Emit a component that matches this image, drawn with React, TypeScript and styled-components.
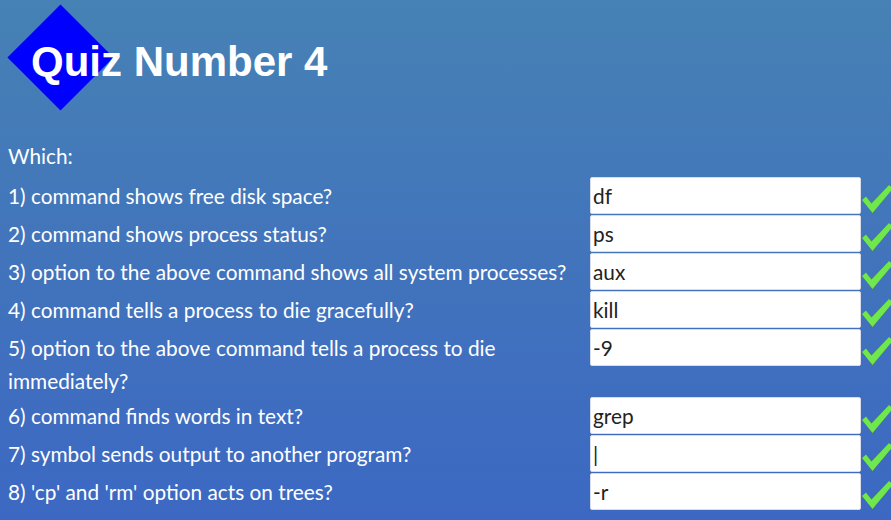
import { Fragment } from "react";
import { createGlobalStyle, styled } from "styled-components";

const questions = [
  { q: "1) command shows free disk space?", a: "df" },
  { q: "2) command shows process status?", a: "ps" },
  { q: "3) option to the above command shows all system processes?", a: "aux" },
  { q: "4) command tells a process to die gracefully?", a: "kill" },
  { q: "5) option to the above command tells a process to die immediately?", a: "-9" },
  { q: "6) command finds words in text?", a: "grep" },
  { q: "7) symbol sends output to another program?", a: "|" },
  { q: "8) 'cp' and 'rm' option acts on trees?", a: "-r" },
];

const GlobalStyle = createGlobalStyle`
  html, body {
    margin: 0;
    height: 100%;
    overflow: hidden;
  }
  body {
    background: linear-gradient(180deg, #4682b4 0%, #4275bb 45%, #3c68c3 100%);
    font-family: Lato, "Open Sans", sans-serif;
    color: #fff;
  }
`;

const Page = styled.div`
  padding: 0 8px;
  min-height: 520px;
`;

const Header = styled.header`
  position: relative;
  height: 139px;
`;

const Diamond = styled.div`
  position: absolute;
  left: 15px;
  top: 20px;
  width: 75px;
  height: 75px;
  background: #0000ff;
  transform: rotate(45deg);
`;

const Title = styled.h1`
  position: relative;
  margin: 0;
  padding: 36px 0 0 23px;
  font-family: "Liberation Sans", Arial, sans-serif;
  font-weight: bold;
  font-size: 42px;
  line-height: 52px;
`;

const Intro = styled.p`
  margin: 0 0 5px;
  font-size: 20.8px;
  line-height: 33px;
`;

const Form = styled.div`
  display: grid;
  grid-template-columns: 582px 271px 30px;
`;

const Label = styled.div`
  padding-top: 2px;
  font-size: 20.8px;
  line-height: 33px;
  padding-right: 14px;
`;

const Answer = styled.input`
  box-sizing: border-box;
  width: 271px;
  height: 37px;
  margin-bottom: 1px;
  padding: 0 2px;
  border: 1px solid #d6dde8;
  border-radius: 2px;
  background: #fff;
  font-family: Lato, sans-serif;
  font-size: 20.8px;
  color: #222;
  outline: none;
`;

const Tick = styled.svg`
  display: block;
  margin: 8px 0 0 1px;
  overflow: visible;
  filter: drop-shadow(0 0 0.5px rgba(140, 70, 20, 0.6));
`;

const Check = () => (
  <Tick width="30" height="29" viewBox="0 0 30 29">
    <polygon points="0,15 4,11.5 9.5,18.5 27,0 31,3.5 10.5,28" fill="#6ee84c" />
  </Tick>
);

export default function App() {
  return (
    <Page>
      <GlobalStyle />
      <Header>
        <Diamond />
        <Title>Quiz Number 4</Title>
      </Header>
      <Intro>Which:</Intro>
      <Form>
        {questions.map((item) => (
          <Fragment key={item.q}>
            <Label>{item.q}</Label>
            <Answer defaultValue={item.a} />
            <Check />
          </Fragment>
        ))}
      </Form>
    </Page>
  );
}
